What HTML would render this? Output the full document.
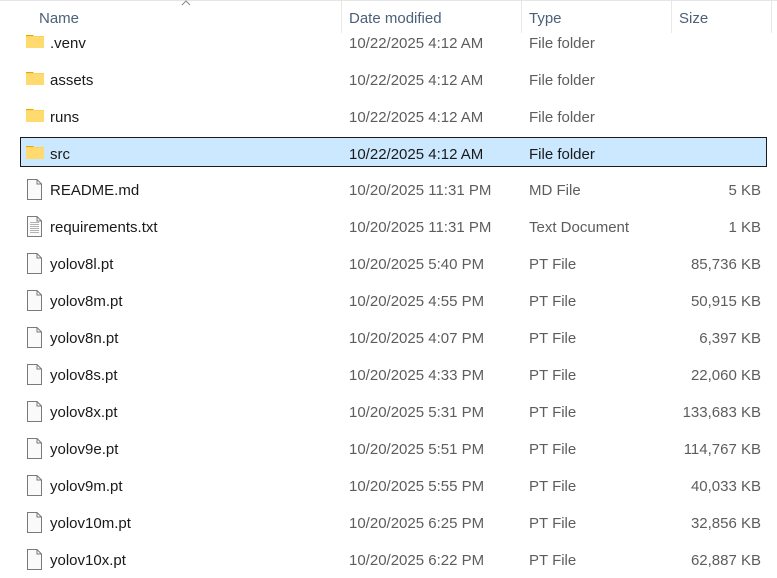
<!DOCTYPE html>
<html><head><meta charset="utf-8"><style>
body{margin:0;width:777px;height:578px;overflow:hidden;background:#fff;font-family:"Liberation Sans",sans-serif;font-size:15px;position:relative}
.top{position:absolute;left:0;top:0;width:777px;height:1px;background:#e5e5e5}
.h{position:absolute;top:10px;color:#4c607a;font-size:15px}
.sep{position:absolute;top:1px;width:1px;height:32px;background:#e8e8e8}
.row{position:absolute;left:20px;width:747px;height:30px}
.sel{background:#cce8ff;outline:1px solid #1a1a1a;outline-offset:-1px}
.t{position:absolute;top:7px;white-space:nowrap}
.n{left:30px;color:#1a1a1a}
.d{left:329px;color:#5d5d5d}
.ty{left:509px;color:#5d5d5d}
.s{right:6px;color:#5d5d5d}
.sel .d,.sel .ty{color:#1a1a1a}
.ic{position:absolute;left:6px;top:5px}
</style></head><body>
<div class="top"></div>
<div class="h" style="left:39px">Name</div>
<svg style="position:absolute;left:181px;top:0" width="10" height="6"><path d="M1 5 L5 1 L9 5" fill="none" stroke="#888" stroke-width="1"/></svg>
<div class="sep" style="left:341px"></div><div class="h" style="left:349px">Date modified</div>
<div class="sep" style="left:521px"></div><div class="h" style="left:529px">Type</div>
<div class="sep" style="left:671px"></div><div class="h" style="left:679px">Size</div>
<div class="sep" style="left:771px"></div>

<div id="rows"></div>
<div class="row" style="top:28px"><svg class="ic" width="20" height="16" viewBox="0 0 20 16"><path d="M0 2 h7 l2 2 h-9z" fill="#e8a800"/><rect x="0" y="3" width="18" height="12" fill="#fcd25c"/><rect x="0" y="4" width="18" height="11" fill="#ffda6e"/></svg><span class="t n">.venv</span><span class="t d">10/22/2025 4:12 AM</span><span class="t ty">File folder</span></div>
<div class="row" style="top:65px"><svg class="ic" width="20" height="16" viewBox="0 0 20 16"><path d="M0 2 h7 l2 2 h-9z" fill="#e8a800"/><rect x="0" y="3" width="18" height="12" fill="#fcd25c"/><rect x="0" y="4" width="18" height="11" fill="#ffda6e"/></svg><span class="t n">assets</span><span class="t d">10/22/2025 4:12 AM</span><span class="t ty">File folder</span></div>
<div class="row" style="top:102px"><svg class="ic" width="20" height="16" viewBox="0 0 20 16"><path d="M0 2 h7 l2 2 h-9z" fill="#e8a800"/><rect x="0" y="3" width="18" height="12" fill="#fcd25c"/><rect x="0" y="4" width="18" height="11" fill="#ffda6e"/></svg><span class="t n">runs</span><span class="t d">10/22/2025 4:12 AM</span><span class="t ty">File folder</span></div>
<div class="row sel" style="top:137px"><svg class="ic" style="top:7px" width="20" height="16" viewBox="0 0 20 16"><path d="M0 2 h7 l2 2 h-9z" fill="#e8a800"/><rect x="0" y="3" width="18" height="12" fill="#fcd25c"/><rect x="0" y="4" width="18" height="11" fill="#ffda6e"/></svg><span class="t n" style="top:9px">src</span><span class="t d" style="top:9px">10/22/2025 4:12 AM</span><span class="t ty" style="top:9px">File folder</span></div>

<script>
var f=[["README.md","10/20/2025 11:31 PM","MD File","5 KB",0],["requirements.txt","10/20/2025 11:31 PM","Text Document","1 KB",1],["yolov8l.pt","10/20/2025 5:40 PM","PT File","85,736 KB"],["yolov8m.pt","10/20/2025 4:55 PM","PT File","50,915 KB"],["yolov8n.pt","10/20/2025 4:07 PM","PT File","6,397 KB"],["yolov8s.pt","10/20/2025 4:33 PM","PT File","22,060 KB"],["yolov8x.pt","10/20/2025 5:31 PM","PT File","133,683 KB"],["yolov9e.pt","10/20/2025 5:51 PM","PT File","114,767 KB"],["yolov9m.pt","10/20/2025 5:55 PM","PT File","40,033 KB"],["yolov10m.pt","10/20/2025 6:25 PM","PT File","32,856 KB"],["yolov10x.pt","10/20/2025 6:22 PM","PT File","62,887 KB"]];
var h="";
f.forEach(function(r,i){var top=175+i*37;
var lines=r[4]?'<path d="M3 6.5h9M3 8.5h9M3 10.5h9M3 12.5h9M3 14.5h9M3 16.5h9" stroke="#9a9a9a" stroke-width="0.8"/>':'';
h+='<div class="row" style="top:'+top+'px"><svg class="ic" style="left:7px;top:4px" width="16" height="21" viewBox="0 0 16 21"><path d="M0.5 0.5 H10 L14.5 5 V20.5 H0.5Z" fill="#fafafa" stroke="#7a7a7a"/><path d="M10 0.5 V5 H14.5" fill="none" stroke="#7a7a7a"/>'+lines+'</svg><span class="t n">'+r[0]+'</span><span class="t d">'+r[1]+'</span><span class="t ty">'+r[2]+'</span><span class="t s">'+r[3]+'</span></div>';});
document.getElementById("rows").innerHTML=h;
</script>
</body></html>
